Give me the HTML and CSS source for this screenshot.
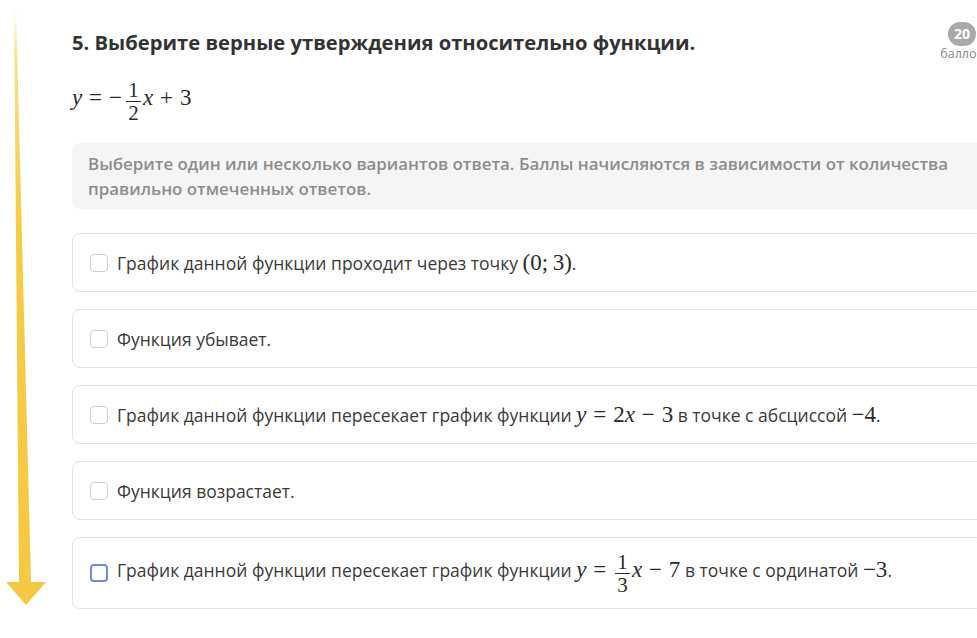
FILE: index.html
```html
<!DOCTYPE html>
<html lang="ru">
<head>
<meta charset="utf-8">
<title>Задание 5</title>
<link rel="stylesheet" href="styles.css">
</head>
<body>
<svg class="pointer" width="50" height="620" viewBox="0 0 50 620">
  <defs>
    <linearGradient id="shaft" x1="0" y1="0" x2="0" y2="1">
      <stop offset="0" stop-color="#f7d45c" stop-opacity="0"/>
      <stop offset="0.08" stop-color="#f6d35a" stop-opacity="0.7"/>
      <stop offset="0.35" stop-color="#f5cb45"/>
      <stop offset="1" stop-color="#f5c842"/>
    </linearGradient>
  </defs>
  <polygon points="14,8 16,8 31,582 46,582 26,605 6,582 19,582" fill="url(#shaft)"/>
</svg>

<main class="task">
  <header class="task-head">
    <h1 class="task-title">5. Выберите верные утверждения относительно функции.</h1>
    <div class="score">
      <span class="score-num">20</span>
      <span class="score-label">баллов</span>
    </div>
  </header>

  <div class="formula">
    <span class="m">
      <i>y</i><span class="op">=</span><span class="bin">−</span><span class="frac"><span class="num">1</span><span class="den">2</span></span><i>x</i><span class="op">+</span>3
    </span>
  </div>

  <p class="hint">Выберите один или несколько вариантов ответа. Баллы начисляются в зависимости от количества правильно отмеченных ответов.</p>

  <ul class="options">
    <li class="option">
      <span class="box"></span>
      <span class="label">График данной функции проходит через точку <span class="m">(0;&thinsp;3)</span>.</span>
    </li>
    <li class="option">
      <span class="box"></span>
      <span class="label">Функция убывает.</span>
    </li>
    <li class="option">
      <span class="box"></span>
      <span class="label">График данной функции пересекает график функции <span class="m"><i>y</i><span class="op">=</span>2<i>x</i><span class="op">−</span>3</span> в точке с абсциссой <span class="m">−4</span>.</span>
    </li>
    <li class="option">
      <span class="box"></span>
      <span class="label">Функция возрастает.</span>
    </li>
    <li class="option option-tall">
      <span class="box box-focus"></span>
      <span class="label">График данной функции пересекает график функции <span class="m"><i>y</i><span class="op">=</span><span class="frac"><span class="num">1</span><span class="den">3</span></span><i>x</i><span class="op">−</span>7</span> в точке с ординатой <span class="m">−3</span>.</span>
    </li>
  </ul>
</main>
</body>
</html>
```

FILE: styles.css
```css
html, body {
  margin: 0;
  padding: 0;
  background: #ffffff;
  overflow: hidden;
}

body {
  width: 977px;
  height: 638px;
  position: relative;
  font-family: "Open Sans", Lato, "Liberation Sans", sans-serif;
  color: #353535;
}

.pointer {
  position: absolute;
  left: 0;
  top: 0;
}

.task {
  width: 912px;
  padding: 28px 0 0 72px;
}

.task-head {
  display: flex;
  justify-content: space-between;
  align-items: flex-start;
}

.task-title {
  margin: 0;
  font-size: 20.2px;
  line-height: 28px;
  font-weight: 700;
  color: #333333;
}

.score {
  display: flex;
  flex-direction: column;
  align-items: center;
  width: 48px;
  margin-top: -6px;
  margin-right: -2px;
}

.score-num {
  width: 28px;
  height: 24px;
  border-radius: 12px;
  background: #a9a9a9;
  color: #ffffff;
  font-size: 14px;
  font-weight: 700;
  line-height: 24px;
  text-align: center;
}

.score-label {
  font-size: 12.5px;
  line-height: 16px;
  color: #8a8a8a;
}

/* math */
.m {
  font-family: "Liberation Serif", "DejaVu Serif", serif;
  font-size: 23px;
  color: #2b2b2b;
  white-space: nowrap;
}

.m i {
  font-style: italic;
}

.m .op {
  margin: 0 0.3em;
}

.m .bin {
  margin-right: 0.1em;
}

/* fraction: stacked numerator / denominator, baseline sits on the denominator */
.frac {
  display: inline-block;
  vertical-align: -15px;
  margin: 0 0.1em;
  font-size: 21px;
  line-height: 20px;
  text-align: center;
}

.frac .num {
  display: block;
  padding: 0 2px 1px;
  border-bottom: 1px solid #2b2b2b;
}

.frac .den {
  display: block;
  padding-top: 1px;
}

.formula {
  margin-top: 21px;
  height: 40px;
  display: flex;
  align-items: flex-end;
  line-height: 32px;
}

.hint {
  margin: 20px 0 0;
  padding: 8px 16px;
  background: #f5f5f5;
  border-radius: 8px;
  color: #8c8c8c;
  font-size: 16.9px;
  line-height: 25px;
  font-weight: 600;
}

.options {
  list-style: none;
  margin: 24px 0 0;
  padding: 0;
  display: flex;
  flex-direction: column;
  gap: 17px;
}

.option {
  display: flex;
  align-items: center;
  gap: 9px;
  min-height: 59px;
  padding: 0 17px;
  border: 1px solid #e3e3e3;
  border-radius: 8px;
  box-sizing: border-box;
}

.option-tall {
  min-height: 72px;
}

.box {
  flex: none;
  width: 18px;
  height: 18px;
  box-sizing: border-box;
  border: 1.5px solid #cfcfcf;
  border-radius: 4px;
  background: #ffffff;
}

.box-focus {
  border: 2px solid #6d8fd8;
}

.label {
  font-size: 17.5px;
  line-height: 26px;
  color: #3a3a3a;
  font-weight: 500;
}
```
